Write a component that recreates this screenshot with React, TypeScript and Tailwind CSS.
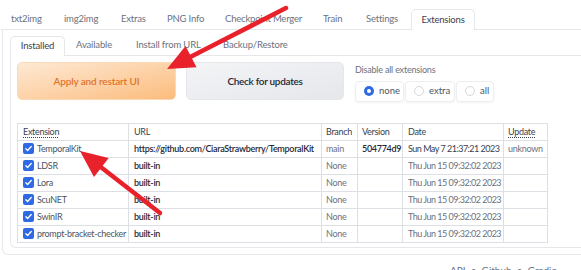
import React from 'react';

const topTabs = [
  { label: 'txt2img', w: 'w-[53px]' },
  { label: 'img2img', w: 'w-[57px]' },
  { label: 'Extras', w: 'w-[46px]' },
  { label: 'PNG Info', w: 'w-[58px]' },
  { label: 'Checkpoint Merger', w: 'w-[98px]' },
  { label: 'Train', w: 'w-[43px]' },
  { label: 'Settings', w: 'w-[55px]' },
];

const subTabs = [
  { label: 'Available', w: 'w-[60px]' },
  { label: 'Install from URL', w: 'w-[87px]' },
  { label: 'Backup/Restore', w: 'w-[80px]' },
];

const rows = [
  { name: 'TemporalKit', url: 'https://github.com/CiaraStrawberry/TemporalKit', branch: 'main', version: '504774d9', date: 'Sun May 7 21:37:21 2023', update: 'unknown', dark: true },
  { name: 'LDSR', url: 'built-in', branch: 'None', version: '', date: 'Thu Jun 15 09:32:02 2023', update: '' },
  { name: 'Lora', url: 'built-in', branch: 'None', version: '', date: 'Thu Jun 15 09:32:02 2023', update: '' },
  { name: 'ScuNET', url: 'built-in', branch: 'None', version: '', date: 'Thu Jun 15 09:32:02 2023', update: '' },
  { name: 'SwinIR', url: 'built-in', branch: 'None', version: '', date: 'Thu Jun 15 09:32:02 2023', update: '' },
  { name: 'prompt-bracket-checker', url: 'built-in', branch: 'None', version: '', date: 'Thu Jun 15 09:32:02 2023', update: '' },
];

function Check() {
  return (
    <span className="flex h-[11px] w-[11px] shrink-0 items-center justify-center rounded-[2px] bg-[#2f6ae5]">
      <svg viewBox="0 0 12 12" className="h-[9px] w-[9px]">
        <path d="M2.5 6.3l2.3 2.3L9.6 3.4" fill="none" stroke="white" strokeWidth="1.8" strokeLinecap="round" strokeLinejoin="round" />
      </svg>
    </span>
  );
}

function Radio({ label, checked, w }: { label: string; checked?: boolean; w: string }) {
  return (
    <div className={`flex h-[21px] ${w} items-center gap-[5px] rounded-[4px] border border-[#eceef1] bg-white pl-[8px] shadow-[0_1px_2px_rgba(0,0,0,0.05)]`}>
      {checked ? (
        <span className="flex h-[10px] w-[10px] items-center justify-center rounded-full bg-[#2f6ae5]">
          <span className="h-[4px] w-[4px] rounded-full bg-white" />
        </span>
      ) : (
        <span className="h-[10px] w-[10px] rounded-full border border-[#d4d7dc] bg-white" />
      )}
      <span className="text-[9.5px] text-[#4b5563]">{label}</span>
    </div>
  );
}

function Arrow({ x1, y1, x2, y2 }: { x1: number; y1: number; x2: number; y2: number }) {
  const dx = x2 - x1;
  const dy = y2 - y1;
  const len = Math.hypot(dx, dy);
  const ux = dx / len;
  const uy = dy / len;
  const hl = 27;
  const hw = 12;
  const bx = x2 - ux * hl;
  const by = y2 - uy * hl;
  const pts = `${x2},${y2} ${bx - uy * hw},${by + ux * hw} ${bx + uy * hw},${by - ux * hw}`;
  return (
    <g>
      <line x1={x1} y1={y1} x2={bx + ux * 2} y2={by + uy * 2} stroke="#e8212b" strokeWidth="4.5" strokeLinecap="round" />
      <polygon points={pts} fill="#e8212b" />
    </g>
  );
}

const cell = 'overflow-hidden whitespace-nowrap border border-[#dcdfe4]';

export default function App() {
  return (
    <div className="relative h-[270px] w-[581px] overflow-hidden bg-white font-['Lato',sans-serif] text-[#374151]">
      {/* Top tabs */}
      <div className="flex w-[640px] items-end whitespace-nowrap pl-[1px] pt-[9px] text-[9.5px] tracking-[-0.2px]">
        {topTabs.map((t) => (
          <div key={t.label} className={`flex h-[21px] ${t.w} shrink-0 items-center border-b border-[#e5e7eb] pl-[10px] text-[#6b7280]`}>
            {t.label}
          </div>
        ))}
        <div className="flex h-[21px] w-[64px] shrink-0 items-center justify-center rounded-t-[5px] border border-b-0 border-[#e5e7eb] bg-white text-[#374151]">
          Extensions
        </div>
        <div className="h-[21px] flex-1 border-b border-[#e5e7eb]" />
      </div>

      {/* Outer panel */}
      <div className="ml-[2px] h-[225px] w-[640px] rounded-b-[6px] border border-t-0 border-[#e5e7eb] pl-[7px]">
        {/* Sub tabs */}
        <div className="flex items-end whitespace-nowrap pt-[6px] text-[9.5px] tracking-[-0.15px]">
          <div className="flex h-[20px] w-[55px] shrink-0 items-center justify-center rounded-t-[5px] border border-b-0 border-[#e5e7eb] text-[#374151]">
            Installed
          </div>
          {subTabs.map((t) => (
            <div key={t.label} className={`flex h-[20px] ${t.w} shrink-0 items-center border-b border-[#e5e7eb] pl-[11px] text-[#6b7280]`}>
              {t.label}
            </div>
          ))}
          <div className="h-[20px] flex-1 border-b border-[#e5e7eb]" />
        </div>

        {/* Inner panel */}
        <div className="h-[192px] overflow-hidden rounded-b-[6px] border border-t-0 border-[#e5e7eb] pl-[6px] pt-[6px]">
          <div className="flex items-start">
            <button className="flex h-[38px] w-[159px] items-center justify-center rounded-[5px] border border-[#fcd9b6] bg-gradient-to-br from-[#fde9d4] to-[#fbbc7c] text-[10px] font-semibold tracking-[-0.15px] text-[#e0742c]">
              Apply and restart UI
            </button>
            <button className="ml-[10px] flex h-[38px] w-[158px] items-center justify-center rounded-[5px] border border-[#e5e7eb] bg-gradient-to-br from-[#f3f4f6] to-[#e5e7eb] text-[10px] font-semibold tracking-[-0.3px] text-[#1f2937]">
              Check for updates
            </button>
            <div className="ml-[11px] flex flex-col">
              <span className="mt-[1px] text-[9px] tracking-[-0.2px] text-[#6b7280]">Disable all extensions</span>
              <div className="mt-[4px] flex gap-[1px]">
                <Radio label="none" checked w="w-[49px]" />
                <Radio label="extra" w="w-[50px]" />
                <Radio label="all" w="w-[38px]" />
              </div>
            </div>
          </div>

          {/* Table */}
          <table className="mt-[21px] w-[530px] table-fixed border-collapse text-[9px] tracking-[-0.3px]">
            <colgroup>
              <col className="w-[111px]" />
              <col className="w-[193px]" />
              <col className="w-[36px]" />
              <col className="w-[45px]" />
              <col className="w-[101px]" />
              <col className="w-[44px]" />
            </colgroup>
            <thead>
              <tr className="h-[17px]">
                <th className={`${cell} pl-[5px] text-left font-normal`}>
                  <span className="underline decoration-dotted underline-offset-2">Extension</span>
                </th>
                <th className={`${cell} pl-[5px] text-left font-normal`}>URL</th>
                <th className={`${cell} pl-[4px] text-left font-normal`}>Branch</th>
                <th className={`${cell} pl-[4px] text-left font-normal`}>Version</th>
                <th className={`${cell} pl-[5px] text-left font-normal`}>Date</th>
                <th className={`${cell} pl-[4px] text-left font-normal`}>
                  <span className="underline decoration-dotted underline-offset-2">Update</span>
                </th>
              </tr>
            </thead>
            <tbody>
              {rows.map((r) => (
                <tr key={r.name} className="h-[17px]">
                  <td className={`${cell} pl-[5px]`}>
                    <div className="flex items-center gap-[3px]">
                      <Check />
                      <span className="text-[#4b5563]">{r.name}</span>
                    </div>
                  </td>
                  <td className={`${cell} pl-[5px] font-semibold text-[#1f2937]`}>{r.url}</td>
                  <td className={`${cell} pl-[4px] text-[#6b7280]`}>{r.branch}</td>
                  <td className={`${cell} pl-[4px] font-semibold text-[#1f2937]`}>{r.version}</td>
                  <td className={`${cell} pl-[5px] tracking-[-0.5px] ${r.dark ? 'text-[#374151]' : 'text-[#6b7280]'}`}>{r.date}</td>
                  <td className={`${cell} pl-[4px] text-[#6b7280]`}>{r.update}</td>
                </tr>
              ))}
            </tbody>
          </table>
        </div>
      </div>

      {/* Footer */}
      <div className="mt-[8px] whitespace-nowrap pl-[450px] text-[10px] text-[#6b7280]">API&nbsp;&nbsp;•&nbsp;&nbsp;Github&nbsp;&nbsp;•&nbsp;&nbsp;Gradio</div>

      {/* Annotation arrows */}
      <svg className="pointer-events-none absolute left-0 top-0" width="581" height="270">
        <Arrow x1={286} y1={8} x2={167} y2={69} />
        <Arrow x1={160} y1={213} x2={80} y2={151} />
      </svg>
    </div>
  );
}
